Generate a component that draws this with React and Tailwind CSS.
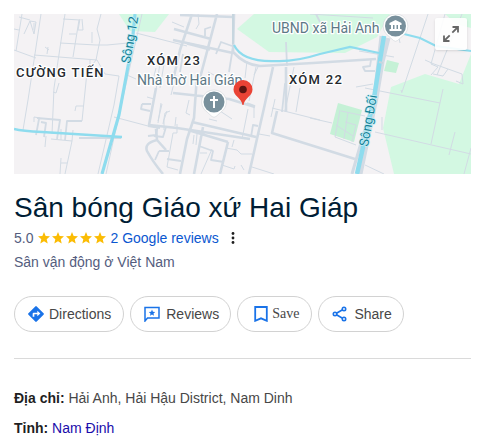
import React from 'react';

const thinRoads = [
  'M22 14 L16 51 M14 29 L19 30 M14 50 L36 58 M41 14 L28 100 L23 130',
  'M34 55 L97 60 L105 74 L119 76 M65 14 L54 88 L52 134',
  'M19 17 L30 20 M30 21 L36 22 L34 34 Z L24 34 M34 23 L34 30 M63 19 L80 20 M80 19 L78 30 L83 30 L82 19 M79 20 L73 57 M69 34 L76 34',
  'M101 14 L97 29 L100 40 L96 60 L87 72 L82 121 M60 43 L96 45 L107 45 L128 43 M92 32 L92 43',
  'M45 47 L49 50 M48 47 L47 54 M59 83 L56 93 L53 92 M86 75 L101 77 M90 60 L90 67',
  'M136 33 L187 46 M142 14 L119 115 L106 174 M119 76 L114 105 L98 174 M127 75 L136 79 M114 117 L148 126',
  'M75 111 L76 106 L84 106 M34 122 L34 117 L40 118 M46 136 L45 147 M51 139 L72 141 L65 174 M61 158 L60 174 M61 163 L67 163 M61 129 L61 140 M73 130 L72 141',
  'M160 63 L156 90 M164 64 L160 88 M156 68 L152 84 M147 97 L154 99 M161 103 L158 123 M167 111 L164 120 L164 130',
  'M172 22 L184 27 M198 14 L199 24 L196 29 M188 43 L207 47 M176 75 L171 95',
  'M162 104 L158 121 M170 111 L165 113 L163 124 M176 117 L175 126 M189 100 L186 113 L190 115 M220 111 L232 119 M209 119 L217 121',
  'M177 124 L177 133 L173 133 L167 167 L178 170 M194 135 L193 144 M197 134 L196 145 M212 149 L201 174 M200 153 L207 153',
  'M226 148 L237 150 L241 154 L252 154 M234 140 L232 147 M222 165 L234 169 L235 166 M241 165 L244 170 M252 167 L274 174',
  'M248 109 L242 139 M254 105 L254 118 M259 134 L270 136 M256 67 L249 101 M247 61 L245 78 M258 67 L254 75',
  'M272 108 L276 109 L320 120 M294 67 L285 111 M300 88 L296 112 M275 99 L271 117 M208 72 L214 75',
  'M365 88 L440 103 M443 89 L431 144 M375 132 L471 154 M382 130 L382 117 M402 93 L401 90 M455 132 L449 155 M471 148 L464 174',
  'M428 14 L402 92 M445 14 L431 64 L438 67 L431 75 M462 14 L445 55 L437 75 M425 60 L434 64 L462 74 L463 84 L456 81 M433 74 L443 76 L448 69',
  'M310 118 L332 123 M340 110 L335 137 L356 145 M341 111 L365 116 M348 112 L344 139 M336 125 L353 136 M345 122 L356 125 L352 142 M365 165 L384 174',
  'M310 14 L373 18 M359 51 L394 57 M399 38 L400 43 M356 87 L373 84',
];

const midRoads = [
  'M37 118 L60 120 L57 139 M39 119 L36 135 M41 122 L46 123 L44 137 M82 121 L67 121 L65 140',
  'M142 104 L151 104 M142 104 L141 109 L150 111 M148 126 L160 128 M158 125 L156 135 L148 136',
  'M187 44 L210 50 M216 54 L221 42 L232 46 M205 36 L205 29 L211 27 M166 127 L163 137 L154 136',
  'M199 146 L213 151 L211 160 L224 162 M159 151 L169 151 M167 159 L181 161 M159 151 L155 160',
  'M251 137 L253 125 L258 126 M247 103 L255 106 M233 47 L229 72 M316 14 L320 22',
  'M375 71 L365 71 L363 67 L370 66 L371 60 M286 42 L287 66 M282 112 L285 84 L287 84 M183 54 L180 72 M79 138 L121 138',
];

const wideRoads = [
  'M192 14 L180 50 L174 76 M217 14 L200 78 M180 15 L233 17 M174 29 L211 39 M173 40 L233 53',
  'M234 14 L233 52 Q245 65 260 66 L313 63 L376 59',
  'M156 88 L149 125 L177 128 L250 139 M197 75 L194 118 L187 139 L180 174',
  'M192 122 L256 137 M228 142 L220 174 M203 127 L194 174 M188 130 L228 142',
  'M156 129 L157 140 L166 150 M157 140 Q144 143 147 151 Q153 162 163 174',
  'M273 67 L264 108 L249 174 M286 67 L286 112 M277 111 L272 133 L355 159 M173 93 L229 99 L255 107',
];

const Land = () => (
  <g>
    <path d="M119 14 L130 31 L155 32 L169 14Z" fill="#d3f8e2" />
    <path d="M254 14 L237 29 L269 52 L345 53 L377 37 L390 14Z" fill="#d3f8e2" />
    <path d="M445 14 L471 14 L471 28 L456 24Z" fill="#d3f8e2" />
    <path d="M471 54 L459 84 L425 74 L391 87 L383 128 L394 174 L471 174Z" fill="#d3f8e2" />
    <path d="M387 60 L399 63 L396 73 L384 71Z M338 103 L362 110 L354 142 L330 134Z" fill="#c5f1d6" />
  </g>
);

function MapPreview() {
  return (
    <div className="relative">
      <svg
        viewBox="14 14 457 160"
        preserveAspectRatio="xMidYMid slice"
        className="block h-40 w-full bg-[#f4f2f4]"
        role="img"
        aria-label="Map of Sân bóng Giáo xứ Hai Giáp"
      >
        <Land />

        {/* roads */}
        <g fill="none" stroke="#d2dbe4" strokeLinejoin="round">
          <path d={thinRoads.join(' ')} strokeWidth="1" />
          <path d={midRoads.join(' ')} strokeWidth="1.8" />
          <path d={wideRoads.join(' ')} strokeWidth="2.6" />
          <path d="M388 38 L382 62 L376 98 L360 174" strokeWidth="5" />
          <path d="M381 36 L374 98 L352 174" strokeWidth="3" />
        </g>

        {/* rivers and canals */}
        <g fill="none" stroke="#8edcee">
          <path d="M135 14 L132 45 L119 115 L102 174" strokeWidth="3.2" />
          <path d="M14 129 Q22 131 42 132 L122 137" strokeWidth="2.4" />
          <path d="M234 45 Q242 62 275 61 Q295 62 320 54 L350 47 L379 53" strokeWidth="2.2" />
          <path d="M384 36 L380 60 L374 98 L357 174" strokeWidth="4.5" />
          <path d="M404 34 L420 38 L436 46 L471 51" strokeWidth="2" />
        </g>
        <path d="M233 14 L233 44 M379 62 L383 63" stroke="#c7d6df" strokeWidth="2" />

        {/* place labels */}
        <g
          fontFamily="Roboto, sans-serif"
          stroke="#ffffff"
          strokeWidth="2.5"
          strokeLinejoin="round"
          style={{ paintOrder: 'stroke' }}
        >
          <g fontSize="13" fontWeight="500" fill="#24292e" className="tracking-widest">
            <text x="16" y="77">CƯỜNG TIẾN</text>
            <text x="147" y="65">XÓM 23</text>
            <text x="289" y="84">XÓM 22</text>
          </g>
          <g fontSize="14" fill="#5d7886">
            <text x="137" y="85">Nhà thờ Hai Giáp</text>
            <text x="272" y="33">UBND xã Hải Anh</text>
          </g>
          <g fontSize="13" fill="#137f96" stroke="#c9eff6" strokeWidth="1.5">
            <text transform="translate(130 64) rotate(-80)">Sông 12</text>
            <text transform="translate(368 147) rotate(-80)">Sông Đối</text>
          </g>
        </g>

        {/* church */}
        <path d="M214 90 A12 12 0 0 1 221 112 L216 116.500 Q214 118 212 116.500 L207 112 A12 12 0 0 1 214 90Z" fill="#fff" stroke="#c9cfd3" strokeWidth=".5" />
        <circle cx="214" cy="102" r="10.500" fill="#78909c" />
        <path d="M214 96 V108 M210 100 H218" stroke="#fff" strokeWidth="2" />

        {/* town hall */}
        <path d="M395.500 14 A12 12 0 0 1 402.500 36 L397.500 40.500 Q395.500 42 393.500 40.500 L388.500 36 A12 12 0 0 1 395.500 14Z" fill="#fff" stroke="#c9cfd3" strokeWidth=".5" />
        <circle cx="395.500" cy="26" r="10.500" fill="#78909c" />
        <path
          d="M395.500 20 L401.500 23 V25 H389.500 V23Z M391 25 H393 V29 H391Z M394.500 25 H396.500 V29 H394.500Z M398 25 H400 V29 H398Z M389.500 29 H401.500 V31 H389.500Z"
          fill="#fff"
        />

        {/* pin */}
        <path
          d="M243 80 A9.500 9.500 0 0 1 252.500 89.500 C252.500 96 244.500 98 243.500 105 H242.500 C241.500 98 233.500 96 233.500 89.500 A9.500 9.500 0 0 1 243 80Z"
          fill="#ea4335"
        />
        <circle cx="243" cy="89.500" r="3.800" fill="#5c1410" />
      </svg>

      <button
        type="button"
        aria-label="Expand map"
        className="absolute top-1 right-1 flex size-8 items-center justify-center rounded-xs bg-white/90 shadow-sm"
      >
        <svg viewBox="0 0 16 16" className="size-4" fill="none" stroke="#666666" strokeWidth="1.800">
          <path d="M9.500 1 H15 V6.500 M15 1 L9.300 6.700 M6.500 15 H1 V9.500 M1 15 L6.700 9.300" />
        </svg>
      </button>
    </div>
  );
}

const Star = () => (
  <svg viewBox="0 0 24 24" className="size-3" fill="#fbbc04">
    <path d="M12 18.300 L19.400 23 L17.400 14.400 L24 8.600 L15.300 7.900 L12 0 L8.700 7.900 L0 8.600 L6.600 14.400 L4.600 23Z" />
  </svg>
);

const DirectionsIcon = () => (
  <svg viewBox="0 0 24 24" className="size-4" fill="#1a73e8">
    <path d="M23.300 10.900 L13.100 .7 a1.500 1.500 0 0 0-2.200 0 L.7 10.900 a1.500 1.500 0 0 0 0 2.200 l10.200 10.200 a1.500 1.500 0 0 0 2.200 0 l10.200-10.200 a1.500 1.500 0 0 0 0-2.200Z M14 15.500 V12.500 H9.500 V16 H7 V11.500 a1.500 1.500 0 0 1 1.500-1.500 H14 V7 l4.500 4.200Z" />
  </svg>
);

const ReviewsIcon = () => (
  <svg viewBox="0 0 16 16" className="size-4">
    <path d="M1 15 V1.500 H15 V12 H3.500Z" fill="none" stroke="#1a73e8" strokeWidth="1.500" />
    <path d="M8 3.500 L8.900 5.700 L11.200 5.900 L9.500 7.400 L10 9.700 L8 8.500 L6 9.700 L6.500 7.400 L4.800 5.900 L7.100 5.700Z" fill="#1a73e8" />
  </svg>
);

const SaveIcon = () => (
  <svg viewBox="0 0 14 16" className="h-4 w-3.5" fill="none" stroke="#1a73e8" strokeWidth="1.800">
    <path d="M1.200 1 H12.800 V14.800 L7 12.300 L1.200 14.800Z" />
  </svg>
);

const ShareIcon = () => (
  <svg viewBox="0 0 16 16" className="size-4" fill="none" stroke="#1a73e8" strokeWidth="1.600">
    <path d="M4.500 7.200 L10.500 3.800 M4.500 8.800 L10.500 12.200" />
    <circle cx="3" cy="8" r="1.700" />
    <circle cx="12" cy="3" r="1.700" />
    <circle cx="12" cy="13" r="1.700" />
  </svg>
);

const actions = [
  { label: 'Directions', icon: DirectionsIcon, className: 'gap-[5px] pr-3 pl-[13px]' },
  { label: 'Reviews', icon: ReviewsIcon, className: 'gap-1.5 pr-[11px] pl-[13px]' },
  { label: 'Save', icon: SaveIcon, className: "gap-1 pr-3 pl-4 font-['Liberation_Serif',serif]" },
  { label: 'Share', icon: ShareIcon, className: 'gap-1.5 pr-[11px] pl-[13px]' },
];

export default function App() {
  return (
    <main className="bg-white pt-3.5 pr-[13px] pl-3.5 font-['Liberation_Sans',Arial,sans-serif] text-sm text-[#474747]">
      <MapPreview />

      <h1 className="mt-4 text-[28px] leading-9 text-[#001d35]">Sân bóng Giáo xứ Hai Giáp</h1>

      <div className="flex h-6 items-center text-[#545d7e]">
        <span>5.0</span>
        <span className="mr-1 ml-[5px] flex gap-0.5" role="img" aria-label="Rated 5.0 out of 5">
          {[1, 2, 3, 4, 5].map((n) => (
            <Star key={n} />
          ))}
        </span>
        <a href="#reviews" className="text-[#0b57d0]">2 Google reviews</a>
        <button type="button" aria-label="More options" className="ml-3 flex h-5 w-1 items-center">
          <svg viewBox="0 0 4 12" className="h-3 w-1" fill="#1f1f1f">
            <circle cx="2" cy="1.500" r="1.400" />
            <circle cx="2" cy="6" r="1.400" />
            <circle cx="2" cy="10.500" r="1.400" />
          </svg>
        </button>
      </div>

      <p className="leading-6 text-[#545d7e]">Sân vận động ở Việt Nam</p>

      <div className="mt-[22px] flex flex-wrap gap-1.5">
        {actions.map(({ label, icon: Icon, className }) => (
          <button
            key={label}
            type="button"
            className={`flex h-9 items-center rounded-full border border-[#d2d2d2] ${className}`}
          >
            <Icon />
            {label}
          </button>
        ))}
      </div>

      <hr className="mt-[26px] border-[#dadada]" />

      <section className="mt-6 leading-[30px]">
        <p>
          <b className="text-[#1f1f1f]">Địa chỉ:</b> Hải Anh, Hải Hậu District, Nam Dinh
        </p>
        <p>
          <b className="text-[#1f1f1f]">Tỉnh:</b>{' '}
          <a href="#nam-dinh" className="text-[#1a0dab]">Nam Định</a>
        </p>
      </section>
    </main>
  );
}
